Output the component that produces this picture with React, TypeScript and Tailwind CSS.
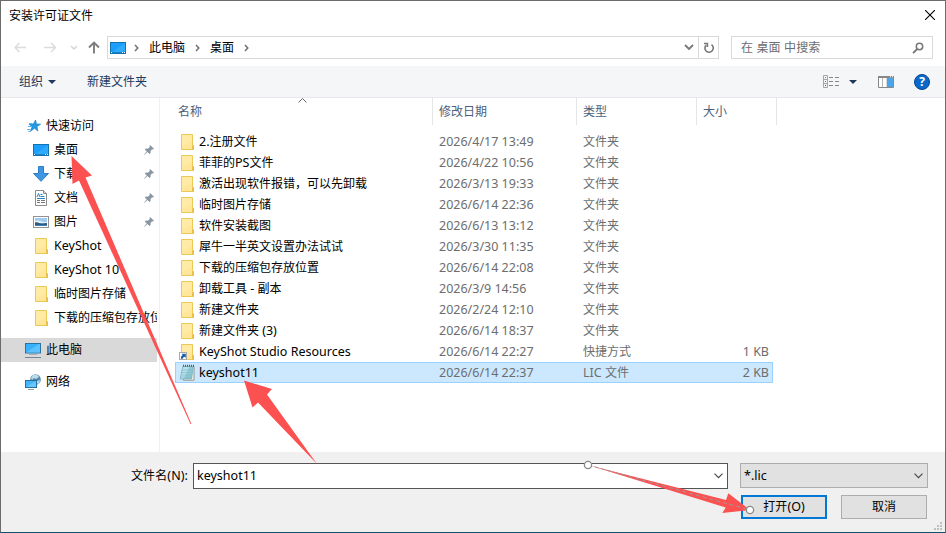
import React from "react";

const FONT = "font-['Noto_Sans','Noto_Sans_CJK_SC',sans-serif]";

// Latin runs are set slightly larger than the CJK glyphs around them.
function T({ children }: { children: string }) {
  const runs = children.match(/[\x21-\x7e][\x20-\x7e]*|[^\x21-\x7e]+/g) ?? [];
  return (
    <>
      {runs.map((run, i) =>
        /^[\x21-\x7e]/.test(run) ? (
          <span key={i} className="text-[12.5px]">{run}</span>
        ) : (
          <span key={i}>{run}</span>
        ),
      )}
    </>
  );
}

function Folder({ shortcut = false }: { shortcut?: boolean }) {
  return (
    <svg width="16" height="18" viewBox="0 0 16 18" className="shrink-0">
      <path d="M2.500 1.500h11v10.500l1 1v3.500h-12z" fill="#ffe699" stroke="#ecc957" />
      <path d="M3 2h10v6L3 13z" fill="#ffeaa6" />
      <path d="M13.500 16.500v-4h1v4z" fill="#fff0b8" stroke="#e9bf45" />
      {shortcut && (
        <>
          <rect x="0.5" y="9.500" width="7" height="7" fill="#fff" stroke="#a9a9a9" />
          <path d="M2 15.800c-.3-2.200.5-3.400 1.700-3.900L2.600 10.700h4.200v4.200l-1.200-1.200c-1 .3-1.600 1-1.700 2.100z" fill="#1f5fae" />
        </>
      )}
    </svg>
  );
}

function Notepad() {
  return (
    <svg width="16" height="18" viewBox="0 0 16 18" className="shrink-0">
      <path d="M5 2.500h10v13.700H4.500z" fill="#fff" stroke="#8f8570" strokeWidth=".9" />
      <path d="M3.800 2.500h10.400l-1.500 12.500H1.200z" fill="#8fcbd6" stroke="#6ba5b4" strokeWidth=".7" />
      <path d="M4.200 3h6L5 14.500H1.700z" fill="#b9e1e7" />
      <path d="M3.500 6h10M3 8.500h10M2.500 11h10M2 13.200h10" stroke="#78b6c4" strokeWidth=".6" />
      <path d="M4 1.700h11" stroke="#4e5557" strokeWidth="1.800" strokeDasharray="1 1" />
    </svg>
  );
}

function Desktop() {
  return (
    <svg width="16" height="14" viewBox="0 0 16 14" className="shrink-0">
      <rect x=".5" y="1.500" width="15" height="11" fill="#1a9fff" stroke="#1273ae" />
      <path d="M1 12 15 2v10z" fill="#30aafd" />
      <path d="M1 11.500h14" stroke="#1684c6" />
      <path d="M1 11.500h1M12 11.500h1M14 11.500h1" stroke="#fff" />
    </svg>
  );
}

function QuickStar() {
  return (
    <svg width="14" height="14" viewBox="0 0 14 14" className="shrink-0">
      <path d="M8.600 1 9.400 5l4.200.2-3.600 2.200.9 4.600L7.500 9.300 3.500 12.300l1.600-4.500L2.200 5.200l4.200-.3z" fill="#2299e5" stroke="#1682ca" strokeWidth=".7" />
      <path d="M2 4.500h3M1 7.500h3M0 10.500h3.500M1.500 12.500h2" stroke="#55b3ef" />
    </svg>
  );
}

function Download() {
  return (
    <svg width="16" height="16" viewBox="0 0 16 16" className="shrink-0">
      <path d="M5.500.5h5v7h5L8 15.300.5 7.500h5z" fill="#3f97e4" stroke="#2e7cc6" />
    </svg>
  );
}

function Doc() {
  return (
    <svg width="16" height="16" viewBox="0 0 16 16" className="shrink-0">
      <path d="M2.500.5h8l3 3v12h-11z" fill="#fff" stroke="#8a8a8a" />
      <path d="M10.500.5v3h3" fill="#ddd" stroke="#8a8a8a" />
      <path d="M7.500 4.500h2M7.500 6.500h4M4 8.500h8" stroke="#2582bf" />
      <path d="m4 7 1.500-3.500L7 7" fill="none" stroke="#2582bf" />
      <path d="M4 10.500h3M8 10.500h4M4 12.500h3M8 12.500h4" stroke="#777" />
    </svg>
  );
}

function Picture() {
  return (
    <svg width="16" height="14" viewBox="0 0 16 14" className="shrink-0">
      <rect x=".5" y="1.500" width="15" height="11" fill="#fff" stroke="#929292" />
      <rect x="2" y="3" width="12" height="8" fill="#9fcbf0" />
      <path d="M2 6c4-2 6 2 12 1v1H2z" fill="#e6f2f7" />
      <path d="M2 7.500c3-1 4 1 7 1l5-.5v3H2z" fill="#315b7c" />
      <path d="M2 10h12v1H2z" fill="#3d7db8" />
    </svg>
  );
}

function Computer() {
  return (
    <svg width="16" height="16" viewBox="0 0 16 16" className="shrink-0">
      <rect x=".5" y="1.500" width="15" height="9.500" fill="#38b0fb" stroke="#2c729e" />
      <path d="M1 10.500 14 2h1v8.500z" fill="#5cc1ff" />
      <path d="M4 12.500h8" stroke="#a3b0b9" />
      <path d="M0 15.500h16" stroke="#728895" />
    </svg>
  );
}

function Network() {
  return (
    <svg width="16" height="16" viewBox="0 0 16 16" className="shrink-0">
      <circle cx="10.500" cy="5.500" r="5.300" fill="#5289a8" />
      <path d="M8 1c3-1 5 0 6 2l-3 2-2-1-2 2-1-2zM12 7l3-1-1 4-3-1z" fill="#bcdce9" />
      <rect x=".5" y="6.500" width="11" height="7" fill="#42b5fb" stroke="#266e9c" />
      <path d="M1 13 11 7v6z" fill="#68c7ff" />
      <path d="M3 15.500h6" stroke="#8ba1ae" />
    </svg>
  );
}

function Pin() {
  return (
    <svg width="10" height="10" viewBox="0 0 10 10" className="shrink-0">
      <path d="m6 0 4 3.800-1 .6-.8-.2L6.500 6l.1 2-1 1-2.100-2L.4 9.800 0 9.400l2.800-2.800L.8 4.400l1-.8 2 .1L5.800 2 5.500.7z" fill="#8795a2" />
    </svg>
  );
}

type Side = { icon: React.ReactNode; label: string; pin?: boolean };

const places: Side[] = [
  { icon: <Desktop />, label: "桌面", pin: true },
  { icon: <Download />, label: "下载", pin: true },
  { icon: <Doc />, label: "文档", pin: true },
  { icon: <Picture />, label: "图片", pin: true },
  { icon: <Folder />, label: "KeyShot" },
  { icon: <Folder />, label: "KeyShot 10" },
  { icon: <Folder />, label: "临时图片存储" },
  { icon: <Folder />, label: "下载的压缩包存放位置" },
];

const files = [
  ["2.注册文件", "2026/4/17 13:49", "文件夹", ""],
  ["菲菲的PS文件", "2026/4/22 10:56", "文件夹", ""],
  ["激活出现软件报错，可以先卸载", "2026/3/13 19:33", "文件夹", ""],
  ["临时图片存储", "2026/6/14 22:36", "文件夹", ""],
  ["软件安装截图", "2026/6/13 13:12", "文件夹", ""],
  ["犀牛一半英文设置办法试试", "2026/3/30 11:35", "文件夹", ""],
  ["下载的压缩包存放位置", "2026/6/14 22:08", "文件夹", ""],
  ["卸载工具 - 副本", "2026/3/9 14:56", "文件夹", ""],
  ["新建文件夹", "2026/2/24 12:10", "文件夹", ""],
  ["新建文件夹 (3)", "2026/6/14 18:37", "文件夹", ""],
  ["KeyShot Studio Resources", "2026/6/14 22:27", "快捷方式", "1 KB"],
  ["keyshot11", "2026/6/14 22:37", "LIC 文件", "2 KB"],
];

function Chevron({ className = "" }: { className?: string }) {
  return (
    <svg width="5" height="8" viewBox="0 0 5 8" className={`shrink-0 ${className}`}>
      <path d="m1 1 2.800 3L1 7" fill="none" stroke="#707070" strokeWidth="1.500" />
    </svg>
  );
}

function ComboArrow() {
  return (
    <svg width="9" height="6" viewBox="0 0 9 6" className="shrink-0">
      <path d="M.5.700 4.500 4.700 8.500.700" fill="none" stroke="#444" strokeWidth="1.100" />
    </svg>
  );
}

function NavBar() {
  return (
    <div className="flex h-[23px] pl-[13px]">
      <svg width="80" height="22" viewBox="0 0 80 22" className="mr-[13px] shrink-0" fill="none">
        <path d="M12 11.500H1M5.500 7 1 11.500 5.500 16M30 11.500h11.500M37 7l4.500 4.500L37 16" stroke="#dcdcdc" strokeWidth="1.500" />
        <path d="m57 10 3 3 3-3" stroke="#d4d4d4" strokeWidth="1.400" />
      </svg>
      <svg width="12" height="22" viewBox="0 0 12 22" className="-ml-[19px] mr-[7px] shrink-0" fill="none">
        <path d="M6 17.500V6.500M1 11.500l5-5 5 5" stroke="#7c7c7c" strokeWidth="1.900" />
      </svg>
      <div className="flex w-[612px] items-center border border-[#d9d9d9]">
        <div className="ml-[2px]"><Desktop /></div>
        <Chevron className="ml-[8px]" />
        <span className="ml-[10px]">此电脑</span>
        <Chevron className="ml-[10px]" />
        <span className="ml-[10px]">桌面</span>
        <Chevron className="ml-[10px]" />
        <svg width="10" height="7" viewBox="0 0 10 7" className="mr-[4px] ml-auto">
          <path d="m1 1 4 4 4-4" fill="none" stroke="#777" strokeWidth="1.800" />
        </svg>
        <div className="flex h-full w-[20px] items-center justify-center border-l border-[#d9d9d9]">
          <svg width="12" height="12" viewBox="0 0 12 12" fill="none" stroke="#777" strokeWidth="1.600">
            <path d="M8.500 2.600A4.200 4.200 0 1 1 3 3.200M4.400 5V1.500H1" />
          </svg>
        </div>
      </div>
      <div className="ml-[12px] flex w-[202px] items-center border border-[#d9d9d9] pl-[9px] pr-[8px] text-[#6d6d6d]">
        <span className="tracking-[0.15px]">在 桌面 中搜索</span>
        <svg width="12" height="12" viewBox="0 0 12 12" className="ml-auto" fill="none" stroke="#777">
          <circle cx="7.500" cy="4.500" r="3.200" strokeWidth="1.500" />
          <path d="M5.200 7 1 11.200" strokeWidth="1.800" />
        </svg>
      </div>
    </div>
  );
}

function Toolbar() {
  return (
    <div className="mt-[7px] flex h-[32px] items-center border-b border-[#e6e8eb] bg-[#f5f6f7] pl-[18px] text-[#1e395b]">
      <span>组织</span>
      <svg width="8" height="4" viewBox="0 0 8 4" className="ml-[5px]"><path d="M0 0h8L4 4z" fill="#1e395b" /></svg>
      <span className="ml-[31px]">新建文件夹</span>
      <svg width="16" height="14" viewBox="0 0 16 14" className="ml-auto" fill="none">
        <path d="M.5.5h4v12h-4zM.5 4.500h4M.5 8.500h4" stroke="#a5a5a5" />
        <path d="M6 2.500h4M12 2.500h4M6 6.500h4M12 6.500h4M6 10.500h4M12 10.500h4" stroke="#888" />
        <path d="M2 2.500h1" stroke="#777" /><path d="M2 6.500h1" stroke="#268add" /><path d="M2 10.500h1" stroke="#c22" />
      </svg>
      <svg width="8" height="4" viewBox="0 0 8 4" className="ml-[10px]"><path d="M0 0h8L4 4z" fill="#1e395b" /></svg>
      <svg width="16" height="12" viewBox="0 0 16 12" className="ml-[21px]">
        <path d="M.5.5h15v11H.5z" fill="#fff" stroke="#888" />
        <path d="M0 1h16" stroke="#888" strokeWidth="2" />
        <path d="M4.500 2v9M9 2v9" stroke="#b4b4b4" />
        <path d="M9 2h6v9H9z" fill="#4ba5e8" />
        <path d="M12 .8h1M14 .8h1" stroke="#fff" />
      </svg>
      <div className="ml-[20px] mr-[15px] flex size-[16px] items-center justify-center rounded-full border border-[#07458f] bg-[#0869ca] font-['Open_Sans',sans-serif] text-[12px] font-bold leading-none text-white">?</div>
    </div>
  );
}

function Sidebar() {
  return (
    <div className="w-[159px] shrink-0 border-r border-[#f0f0f0] pt-[16px] text-black">
      <div className="flex h-6 items-center pl-[26px]"><QuickStar /><span className="ml-[5px]">快速访问</span></div>
      {places.map((p) => (
        <div key={p.label} className="flex h-6 w-[156px] items-center overflow-hidden pl-[32px] whitespace-nowrap">
          {p.icon}
          <span className="ml-[5px]"><T>{p.label}</T></span>
          {p.pin && <div className="ml-auto mr-[3px]"><Pin /></div>}
        </div>
      ))}
      <div className="mt-[8px] flex h-6 w-[156px] items-center bg-[#d9d9d9] pl-[24px]"><Computer /><span className="ml-[5px]">此电脑</span></div>
      <div className="mt-[8px] flex h-6 items-center pl-[24px]"><Network /><span className="ml-[5px]">网络</span></div>
    </div>
  );
}

function FileList() {
  return (
    <div className="flex-1">
      <div className="flex h-[27px] text-[#4c607a]">
        <div className="flex w-[273px] border-r border-[#e5e5e5] pl-[18px]">
          <span className="w-[120px] leading-[27px]">名称</span>
          <svg width="9" height="5" viewBox="0 0 9 5"><path d="m.5 4.500 4-4 4 4" fill="none" stroke="#666" /></svg>
        </div>
        <div className="w-[144px] border-r border-[#e5e5e5] pl-[6px] leading-[27px]">修改日期</div>
        <div className="w-[120px] border-r border-[#e5e5e5] pl-[6px] leading-[27px]">类型</div>
        <div className="w-[80px] border-r border-[#e5e5e5] pl-[6px] leading-[27px]">大小</div>
      </div>
      <div className="mt-[6px] ml-[15px] w-[598px]">
        {files.map(([name, date, type, size], i) => (
          <div
            key={name}
            className={`flex h-[21px] items-center border pl-[3px] leading-[19px] whitespace-nowrap ${i === 11 ? "border-[#99d1ff] bg-[#cce8ff]" : "border-transparent"}`}
          >
            {i === 11 ? <Notepad /> : <Folder shortcut={i === 10} />}
            <span className="ml-[4px] w-[240px] text-black"><T>{name}</T></span>
            <span className="w-[144px] text-[#6d6d6d]"><T>{date}</T></span>
            <span className="w-[120px] text-[#6d6d6d]"><T>{type}</T></span>
            <span className="w-[66px] text-right text-[#6d6d6d]"><T>{size}</T></span>
          </div>
        ))}
      </div>
    </div>
  );
}

function Footer() {
  return (
    <div className="flex h-[80px] flex-col bg-[#f0f0f0] pt-[11px] text-black">
      <div className="flex h-[26px]">
        <span className="ml-[130px] w-[62px] leading-[25px] tracking-[0.1px]"><T>文件名(N):</T></span>
        <div className="flex w-[535px] items-center border border-[#555] bg-white pl-[3px] pr-[4px]">
          <T>keyshot11</T><div className="ml-auto"><ComboArrow /></div>
        </div>
        <div className="ml-[12px] flex h-[25px] w-[188px] items-center border border-[#adadad] bg-[#e1e1e1] pl-[3px] pr-[4px]">
          <T>*.lic</T><div className="ml-auto"><ComboArrow /></div>
        </div>
      </div>
      <div className="mt-[6px] flex h-[24px] justify-end gap-[14px] pr-[18px]">
        <div className="flex w-[86px] items-center justify-center border-2 border-[#0078d7] bg-[#e1e1e1]"><span><T>打开(O)</T></span></div>
        <div className="flex w-[86px] items-center justify-center border border-[#adadad] bg-[#e1e1e1]">取消</div>
      </div>
      <div className="mr-[3px] mt-[3px] flex justify-end">
        <svg width="8" height="8" viewBox="0 0 8 8" fill="#bfbfbf"><path d="M6 0h2v2H6zM3 3h2v2H3zM6 3h2v2H6zM0 6h2v2H0zM3 6h2v2H3zM6 6h2v2H6z" /></svg>
      </div>
    </div>
  );
}

export default function App() {
  return (
    <div className={`relative flex h-[533px] w-[946px] flex-col overflow-hidden border border-[#6b6b6b] border-b-[#17506b] bg-white text-[12px] leading-[18px] text-black ${FONT}`}>
      <div className="flex h-[35px] shrink-0 justify-between pl-[8px] pr-[10px] pt-[6px]">
        <span>安装许可证文件</span>
        <svg width="10" height="10" viewBox="0 0 10 10" className="mt-[3px]"><path d="m0 0 10 10M10 0 0 10" stroke="#000" strokeWidth="1.100" /></svg>
      </div>
      <NavBar />
      <Toolbar />
      <div className="flex h-[354px] shrink-0"><Sidebar /><FileList /></div>
      <Footer />
      <svg width="946" height="533" viewBox="0 0 946 533" className="pointer-events-none absolute -left-px -top-px" fill="#fb5151">
        <path d="M71.500 156 92 175.500l-6.500 2L191.500 424h-1L79 180.500 72.500 184z" />
        <path d="M244 380.500 272 389l-5 5.500L317 464 258 402.500l-5.500 5z" />
        <path d="M588 465 726 500 728.300 493.300 750 510l-27.700 2.900 3.400-5.300z" />
        <path d="m588 465 162 45" stroke="#9a9a9a" strokeDasharray="4 3" fill="none" />
        <circle cx="588" cy="465" r="3.600" fill="#fff" stroke="#8a8a8a" strokeWidth="1.300" />
        <circle cx="750" cy="510" r="3.600" fill="#fff" stroke="#8a8a8a" strokeWidth="1.300" />
      </svg>
    </div>
  );
}
